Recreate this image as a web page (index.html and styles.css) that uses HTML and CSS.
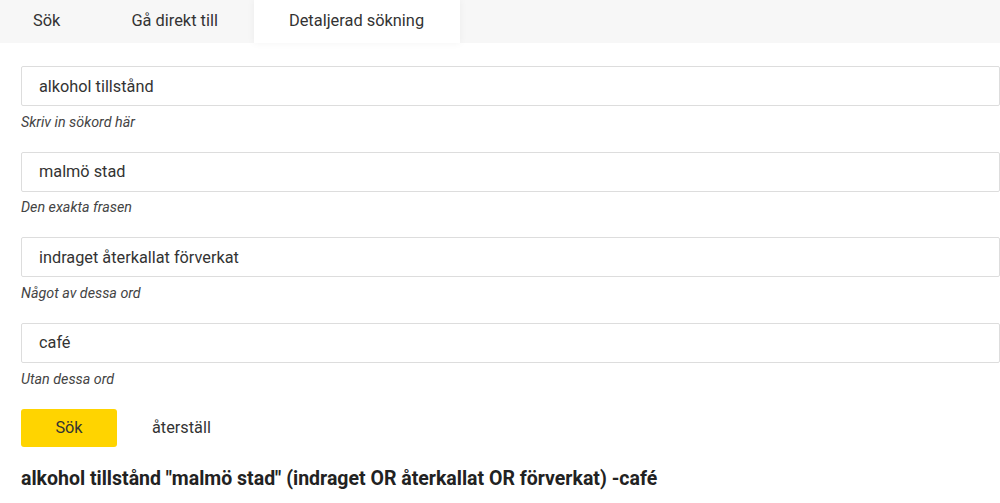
FILE: index.html
```html
<!DOCTYPE html>
<html lang="sv">
<head>
  <meta charset="UTF-8">
  <meta name="viewport" content="width=device-width, initial-scale=1.0">
  <title>Detaljerad sökning</title>
  <link rel="stylesheet" href="styles.css">
</head>
<body>

  <!-- Tabs -->
  <div class="tabs">
    <a class="tab">Sök</a>
    <a class="tab">Gå direkt till</a>
    <a class="tab active">Detaljerad sökning</a>
  </div>

  <div class="search-form">
    <div class="field">
      <input type="text" value="alkohol tillstånd">
      <span class="hint">Skriv in sökord här</span>
    </div>

    <div class="field">
      <input type="text" value="malmö stad">
      <span class="hint">Den exakta frasen</span>
    </div>

    <div class="field">
      <input type="text" value="indraget återkallat förverkat">
      <span class="hint">Något av dessa ord</span>
    </div>

    <div class="field">
      <input type="text" value="café">
      <span class="hint">Utan dessa ord</span>
    </div>

    <div class="actions">
      <button class="search-button">Sök</button>
      <a class="reset-link">återställ</a>
    </div>

    <h3 class="query">alkohol tillstånd "malmö stad" (indraget OR återkallat OR förverkat) -café</h3>
  </div>

</body>
</html>
```

FILE: styles.css
```css
body {
  margin: 0;
  font-family: Roboto, "Liberation Sans", sans-serif;
  color: #333;
  background-color: #fff;
}

/* Tabs */
.tabs {
  display: flex;
  height: 43px;
  background-color: #f7f7f7;
}

.tab {
  display: flex;
  align-items: center;
  padding: 0 36px 0 35px;
  margin-top: -3px;
  font-size: 16.4px;
  color: #333;
  cursor: pointer;
}

.tab:first-child {
  padding-left: 33px;
}

.tab.active {
  background-color: #fff;
  margin-top: 0;
  padding-bottom: 3px;
  box-shadow: 0 0 8px rgba(0, 0, 0, 0.05);
}

/* Form */
.search-form {
  padding: 23px 0 0 21px;
}

.field {
  display: flex;
  flex-direction: column;
  margin-bottom: 22px;
}

.field input {
  height: 40px;
  box-sizing: border-box;
  border: 1px solid #ddd;
  border-radius: 2px;
  padding: 0 17px;
  font-family: inherit;
  font-size: 16.3px;
  color: #333;
  outline: none;
}

.hint {
  margin-top: 7.67px;
  font-size: 14.3px;
  line-height: 16px;
  font-style: italic;
  color: #444;
}

.actions {
  display: flex;
  align-items: center;
  gap: 35px;
}

.search-button {
  width: 96px;
  height: 38px;
  background-color: #ffd400;
  border: none;
  border-radius: 3px;
  font-family: inherit;
  font-size: 16.3px;
  color: #333;
  cursor: pointer;
}

.reset-link {
  font-size: 16.3px;
  color: #333;
  cursor: pointer;
}

.query {
  margin: 20px 0 0;
  font-size: 19.5px;
  line-height: 23px;
  font-weight: bold;
  color: #222;
}
```
